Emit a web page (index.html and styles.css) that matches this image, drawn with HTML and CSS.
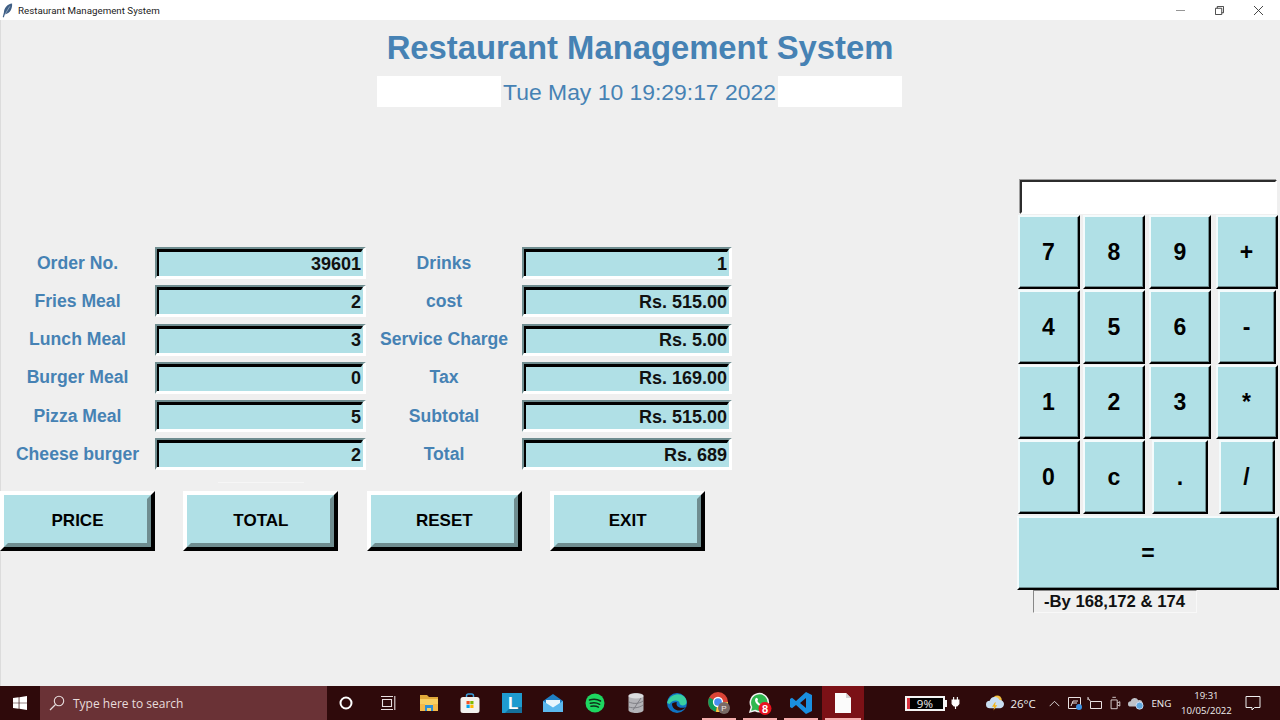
FILE: index.html
```html
<!DOCTYPE html>
<html lang="en">
<head>
<meta charset="utf-8">
<title>Restaurant Management System</title>
<link rel="stylesheet" href="styles.css">
</head>
<body>
<div class="app">
  <header class="titlebar">
    <div class="titlebar-left">
      <svg class="feather" viewBox="0 0 12 16"><path d="M11 .3C6 .8 2.300 5 2 10.500L.8 15l1 .6L3.500 12C8.500 11.500 11.500 6 11 .3z" fill="#3f5f85"/><path d="M8.500 3.500L2.300 14" stroke="#c9d6e6" stroke-width=".6" fill="none"/></svg>
      <span class="titlebar-text">Restaurant Management System</span>
    </div>
    <div class="win-controls">
      <span class="win-btn"><svg viewBox="0 0 10 10"><path d="M0 5h10" stroke="#8a8a8a" fill="none"/></svg></span>
      <span class="win-btn"><svg viewBox="0 0 10 10"><path d="M.5 2.500h7v7h-7zM2.500 2.500v-2h7v7h-2" stroke="#333" fill="none"/></svg></span>
      <span class="win-btn"><svg viewBox="0 0 10 10"><path d="M0 0l10 10M10 0L0 10" stroke="#333" fill="none"/></svg></span>
    </div>
  </header>

  <main class="window">
    <div class="heading">
      <h1 class="title">Restaurant Management System</h1>
      <div class="date-bar"><span class="date">Tue May 10 19:29:17 2022</span></div>
    </div>

    <div class="content">
      <section class="orders">
        <div class="form">
          <div class="label">Order No.</div><div class="entry"><span class="entry-val">39601</span></div>
          <div class="label">Drinks</div><div class="entry"><span class="entry-val">1</span></div>
          <div class="label">Fries Meal</div><div class="entry"><span class="entry-val">2</span></div>
          <div class="label">cost</div><div class="entry"><span class="entry-val">Rs. 515.00</span></div>
          <div class="label">Lunch Meal</div><div class="entry"><span class="entry-val">3</span></div>
          <div class="label">Service Charge</div><div class="entry"><span class="entry-val">Rs. 5.00</span></div>
          <div class="label">Burger Meal</div><div class="entry"><span class="entry-val">0</span></div>
          <div class="label">Tax</div><div class="entry"><span class="entry-val">Rs. 169.00</span></div>
          <div class="label">Pizza Meal</div><div class="entry"><span class="entry-val">5</span></div>
          <div class="label">Subtotal</div><div class="entry"><span class="entry-val">Rs. 515.00</span></div>
          <div class="label">Cheese burger</div><div class="entry"><span class="entry-val">2</span></div>
          <div class="label">Total</div><div class="entry"><span class="entry-val">Rs. 689</span></div>
        </div>
        <div class="faint-line"></div>
        <div class="actions">
          <div class="action"><span class="action-face">PRICE</span></div>
          <div class="action"><span class="action-face">TOTAL</span></div>
          <div class="action"><span class="action-face">RESET</span></div>
          <div class="action"><span class="action-face">EXIT</span></div>
        </div>
      </section>

      <aside class="calc">
        <div class="calc-display"></div>
        <div class="keys">
          <div class="key">7</div><div class="key">8</div><div class="key">9</div><div class="key">+</div>
          <div class="key">4</div><div class="key">5</div><div class="key">6</div><div class="key key-mid">-</div>
          <div class="key">1</div><div class="key">2</div><div class="key">3</div><div class="key">*</div>
          <div class="key">0</div><div class="key">c</div><div class="key key-narrow">.</div><div class="key key-narrow">/</div>
          <div class="key key-wide">=</div>
        </div>
        <div class="credit">-By 168,172 &amp; 174</div>
      </aside>
    </div>
  </main>

  <footer class="taskbar">
    <div class="start"><svg class="i16" viewBox="0 0 16 16"><path d="M0 2.300l6.500-.9v6.200H0zM7.300 1.300L16 0v7.600H7.300zM0 8.400h6.500v6.200L0 13.700zM7.300 8.400H16V16l-8.700-1.300z" fill="#fff"/></svg></div>
    <div class="search">
      <svg class="i16" viewBox="0 0 16 16"><circle cx="10" cy="6" r="4.700" fill="none" stroke="#e6dcdc" stroke-width="1.100"/><path d="M6.500 9.500L1 15" stroke="#e6dcdc" stroke-width="1.200"/></svg>
      <span class="search-text">Type here to search</span>
    </div>
    <div class="apps">
      <div class="app-icon"><svg class="i16" viewBox="0 0 16 16"><circle cx="8" cy="8" r="5.500" fill="none" stroke="#fff" stroke-width="2"/></svg></div>
      <div class="app-icon"><svg class="i16" viewBox="0 0 16 16"><path d="M2.500 4.500h9v7h-9zM1 1.500h12M1 14.500h12M14.800 1v14" fill="none" stroke="#e8e0e0" stroke-width="1.100"/></svg></div>
      <div class="app-icon"><svg class="i24" viewBox="0 0 24 24"><path d="M3 4h7l2 2h9v6H3z" fill="#e0a93a"/><path d="M3 8h18v12H3z" fill="#f8cf62"/><path d="M3 13h5v7H3zM16 13h5v7h-5z" fill="#f3b94a"/><path d="M8 14h8v6h-2v-3h-4v3H8z" fill="#2e8fd6"/></svg></div>
      <div class="app-icon"><svg class="i24" viewBox="0 0 24 24"><path d="M8.500 7V5a2 2 0 0 1 2-2h3a2 2 0 0 1 2 2v2" fill="none" stroke="#3aa0dc" stroke-width="1.500"/><rect x="2.500" y="6" width="19" height="16" rx="2.500" fill="#f3f1ee"/><path d="M8.500 10h3.200v3.200H8.500z" fill="#f25022"/><path d="M12.300 10h3.200v3.200h-3.200z" fill="#7fba00"/><path d="M8.500 13.800h3.200V17H8.500z" fill="#00a4ef"/><path d="M12.300 13.800h3.200V17h-3.200z" fill="#ffb900"/></svg></div>
      <div class="app-icon"><svg class="i24" viewBox="0 0 24 24"><rect x="2" y="2" width="20" height="20" fill="#1f9bcf"/><path d="M5 22l6-6h11v6z" fill="#15709c"/><text class="logo-l" x="8" y="18">L</text></svg></div>
      <div class="app-icon"><svg class="i24" viewBox="0 0 24 24"><path d="M2 10L12 3l10 7v11H2z" fill="#1f7fc4"/><path d="M5 9h14v5l-7 3.500L5 14z" fill="#eaf6fd"/><path d="M2 10l10 6.500L22 10v11H2z" fill="#5cb8ee"/></svg></div>
      <div class="app-icon"><svg class="i24" viewBox="0 0 24 24"><circle cx="12" cy="12" r="9.500" fill="#1ed760"/><path d="M6.500 9c3.800-1.100 8-.8 11 1M7.300 12.300c3.200-.9 6.500-.6 9.300 1M8 15.300c2.600-.6 5.200-.4 7.400.8" fill="none" stroke="#10301b" stroke-width="1.500" stroke-linecap="round"/></svg></div>
      <div class="app-icon"><svg class="i24" viewBox="0 0 24 24"><path d="M4.500 5c0-4 15-4 15 0v14c0 4-15 4-15 0z" fill="#b4b4b8"/><ellipse cx="12" cy="5" rx="7.500" ry="2.500" fill="#dcdcde"/><path d="M5 11c4 2 10 2 14-1M5 16c4 1.500 10 1 14-2M9 19L17 7" fill="none" stroke="#7f7f85"/></svg></div>
      <div class="app-icon"><svg class="i24" viewBox="0 0 24 24"><circle cx="12" cy="12" r="10" fill="#0f74c4"/><path d="M2.200 12C3 5 13 0 19 5.500c3 2.800 3.300 6.700 1.500 8-2 1.600-6 1-6-1.500 0-3-7-4-10 1z" fill="#3ad0a0"/><path d="M7 13c0 4 4 7 8 6.500 2.500-.4 4.500-1.500 6-3.500-2 1-5 1.200-7 .3-2.500-1-3-3.500-2-5-2.500 0-5 .5-5 1.700z" fill="#2b0a0a"/></svg></div>
      <div class="app-icon running"><svg class="i24" viewBox="0 0 24 24"><circle cx="11" cy="11" r="10" fill="#db4437"/><path d="M11 11L2.300 6.500A10 10 0 0 0 9 20.800z" fill="#0f9d58"/><path d="M11 11l-2 9.800A10 10 0 0 0 21 11z" fill="#ffcd40"/><circle cx="11" cy="11" r="4.500" fill="#4a8df0" stroke="#fff" stroke-width="1.300"/><circle cx="17" cy="17" r="6" fill="#7a6a66"/><text class="badge-p" x="17" y="20">P</text></svg></div>
      <div class="app-icon running"><svg class="i24" viewBox="0 0 24 24"><path d="M2 21l1.500-5A9 9 0 1 1 7 19.500z" fill="#2fb84f" stroke="#f3f3f3" stroke-width="1.500"/><path d="M7.500 7.500c1-1.500 2-.5 2.500 1 .2.700-.8 1-.5 1.700.700 1.300 1.500 2 2.800 2.700.700.300 1-.8 1.700-.5 1.500.5 1.700 1.500.7 2.500-3 2-9.500-4-7.200-7.400z" fill="#fff"/><circle cx="17" cy="17.500" r="6.500" fill="#e8121e"/><text class="badge-n" x="17" y="21.500">8</text></svg></div>
      <div class="app-icon running"><svg class="i24" viewBox="0 0 24 24"><path d="M17 1l6 3v16l-6 3L7 14l-4 3.200L1 16v-8l2-1.200L7 10zM17 7l-6 5 6 5z" fill="#1a8fe0"/></svg></div>
      <div class="app-icon app-active"><svg class="i24" viewBox="0 0 24 24"><path d="M4 2h11l5 5v15H4z" fill="#fbfbfb"/><path d="M15 2l5 5h-5z" fill="#d4d4d4"/></svg></div>
    </div>
    <div class="tray">
      <div class="battery"><span class="battery-level"></span><span class="battery-text">9%</span></div>
      <svg class="plug" viewBox="0 0 12 16"><path d="M3.500 0v4M8.500 0v4M1.500 4h9v5l-2.500 3H4L1.500 9zM6 12v4" fill="#fff" stroke="#fff" stroke-width="1.500"/></svg>
      <svg class="weather" viewBox="0 0 26 24"><circle cx="16" cy="8" r="6" fill="#f6c242"/><path d="M6 19a5 5 0 0 1 0-10 7 7 0 0 1 13-1 5.500 5.500 0 0 1 1 11z" fill="#c9dff2"/><path d="M13 11l-4 6h3l-1 5 5-7h-3l1-4z" fill="#f3b51b"/></svg>
      <span class="temp">26°C</span>
      <svg class="chevron" viewBox="0 0 12 8"><path d="M.5 7L6 1.500 11.500 7" fill="none" stroke="#eee"/></svg>
      <svg class="i16 tray-a" viewBox="0 0 16 16"><path d="M1.500 2.500h12v11h-12zM4 11l2-5h5M5 8h5" fill="none" stroke="#e8e0e0"/><circle cx="12" cy="12" r="3" fill="#3b8fe0"/></svg>
      <svg class="i16 tray-b" viewBox="0 0 16 16"><path d="M3.500 6.500h11v7h-11zM3.500 6.500l-2-3" fill="none" stroke="#e8e0e0"/><path d="M1 2v3" stroke="#e8e0e0"/></svg>
      <svg class="i16 tray-c" viewBox="0 0 16 16"><path d="M3.500 4.500h7v10h-7zM5 1.500h4M10.500 8l3-1.500v5l-3-1.500" fill="none" stroke="#e8e0e0"/></svg>
      <svg class="i16 tray-d" viewBox="0 0 18 16"><path d="M3 12a3 3 0 0 1 0-6 4.500 4.500 0 0 1 8.500-1A3.500 3.500 0 0 1 14 12z" fill="#bfc2c8"/><circle cx="13" cy="11" r="4" fill="#5ea7de" stroke="#eef" stroke-width=".8"/></svg>
      <span class="lang">ENG</span>
      <div class="clock"><span>19:31</span><span>10/05/2022</span></div>
      <svg class="i16 notify" viewBox="0 0 16 16"><path d="M1 1.500h14v11H9.500L7 15v-2.500H1z" fill="none" stroke="#eee"/></svg>
    </div>
  </footer>
</div>
</body>
</html>
```
FILE: styles.css
```css
* { box-sizing: border-box; }
html, body { margin: 0; padding: 0; }
body { font-family: "Liberation Sans", Arial, sans-serif; background: #efefef; }
.app { width: 1280px; height: 720px; display: flex; flex-direction: column; overflow: hidden; }

/* title bar */
.titlebar { height: 20px; background: #fff; display: flex; justify-content: space-between; align-items: center; flex: none; }
.titlebar-left { display: flex; align-items: center; padding-left: 2px; gap: 5px; }
.feather { width: 11px; height: 15px; }
.titlebar-text { font-family: Roboto, sans-serif; font-size: 9.750px; color: #222; white-space: nowrap; }
.win-controls { display: flex; padding-right: 2px; }
.win-btn { width: 39px; height: 20px; display: flex; align-items: center; justify-content: center; }
.win-btn svg { width: 9px; height: 9px; }

/* main window */
.window { flex: 1; min-height: 0; background: #efefef; box-shadow: inset 1px 0 0 #dcdcdc; }
.heading { display: flex; flex-direction: column; align-items: center; }
.title { margin: 0; height: 56px; line-height: 56px; font-size: 32.800px; font-weight: 700; color: #4682b4; }
.date-bar { width: 525px; height: 31px; margin-right: 1px; background: #fff; display: flex; justify-content: center; }
.date { background: #efefef; padding: 0 2px; font-size: 22.900px; line-height: 32px; color: #4682b4; }
.content { display: flex; justify-content: space-between; margin-top: 72px; }

/* order form */
.orders { padding-top: 68px; width: 732px; }
.form { display: grid; grid-template-columns: 155px 211px 156px 210px; grid-auto-rows: 38.250px; }
.label { height: 32px; display: flex; align-items: center; justify-content: center; font-size: 17.600px; font-weight: 700; color: #4682b4; white-space: nowrap; }
.entry { height: 32px; border-style: solid; border-width: 2px 3px 3px 2px; border-color: #6f8d90 #fff #fff #6f8d90; display: flex; }
.entry-val { flex: 1; border-style: solid; border-width: 3px 2px 0 2px; border-color: #000 #b0e0e6 #b0e0e6 #000; background: #b0e0e6; display: flex; align-items: center; justify-content: flex-end; font-size: 18px; font-weight: 700; color: #111; }
.faint-line { width: 86px; height: 1px; margin: 5px 0 0 218px; background: #f6f6f6; }
.actions { display: flex; gap: 28.400px; margin-top: 8.500px; }
.action { width: 155px; height: 60px; border: 4px solid; border-color: #fff #000 #000 #fff; display: flex; }
.action-face { flex: 1; border: 4px solid; border-color: #b0e0e6 #6f8d90 #6f8d90 #b0e0e6; background: #b0e0e6; display: flex; align-items: center; justify-content: center; font-size: 17px; font-weight: 700; color: #000; }

/* calculator */
.calc { width: 264px; flex: none; }
.calc-display { width: 257px; height: 34px; margin: 1px 0 0 4px; background: #fff; border: 2px solid; border-color: #2c2c2c #fff #fff #2c2c2c; box-shadow: -1px -1px 0 #a0a0a0; }
.keys { display: grid; grid-template-columns: 65px 66px 66px 67px; grid-auto-rows: 75px; margin-top: 1px; justify-items: center; align-items: start; }
.key { width: 62px; height: 74px; background: #b0e0e6; border: 2px solid; border-color: #f4fbfc #000 #000 #f4fbfc; box-shadow: inset -1px -1px 0 #6f8d90; display: flex; align-items: center; justify-content: center; font-size: 23px; font-weight: 700; color: #000; }
.key-mid { width: 58px; }
.key-narrow { width: 56px; }
.key-wide { grid-column: 1 / -1; width: 262px; height: 74px; margin-top: 1px; }
.credit { width: 164px; height: 23px; border: 1px solid; border-color: #888 #f8f8f8 #f8f8f8 #888; padding: 1px 0 0 10px; margin-left: 17px; display: flex; align-items: center; font-size: 16.700px; font-weight: 700; color: #111; white-space: nowrap; }

/* taskbar */
.taskbar { height: 34px; flex: none; background: #2f0a0b; display: flex; align-items: center; color: #eee; }
.i16 { width: 16px; height: 16px; flex: none; display: block; }
.i24 { width: 24px; height: 24px; flex: none; display: block; }
.start { width: 40px; height: 34px; display: flex; align-items: center; justify-content: center; }
.start .i16 { width: 14px; height: 14px; }
.search { width: 287px; height: 34px; background: #6a3236; display: flex; align-items: center; padding-left: 9px; gap: 8px; }
.search-text { font-family: "Open Sans", sans-serif; font-size: 12px; color: #e8dcdc; }
.apps { display: flex; margin-left: -1.500px; }
.app-icon { width: 41.400px; height: 34px; display: flex; align-items: center; justify-content: center; }
.running { background: linear-gradient(#f4adad, #f4adad) center bottom / 34px 2px no-repeat; }
.app-active { background: linear-gradient(#f4adad, #f4adad) center bottom / 36px 2px no-repeat, #7b1116; }
.logo-l { font-family: "Liberation Sans", sans-serif; font-weight: 700; font-size: 17px; fill: #fff; }
.badge-p { font-family: "Liberation Sans", sans-serif; font-size: 8px; fill: #f0e8e8; text-anchor: middle; }
.badge-n { font-family: "Liberation Sans", sans-serif; font-weight: 700; font-size: 11px; fill: #fff; text-anchor: middle; }

.tray { display: flex; align-items: center; margin-left: 41.300px; }
.battery { width: 40px; height: 15px; margin-right: 2px; background: #000; border: 2px solid #f4f4f4; display: flex; align-items: center; position: relative; justify-content: center; }
.battery::after { content: ""; position: absolute; right: -4px; top: 2px; width: 2px; height: 7px; background: #f4f4f4; }
.battery-level { position: absolute; left: 0; top: 0; bottom: 0; width: 3px; background: #d9323e; }
.battery-text { font-family: "Open Sans", sans-serif; font-size: 11.500px; color: #eee; }
.plug { width: 9px; height: 12px; margin-left: 4.500px; flex: none; }
.weather { width: 20px; height: 18px; margin-left: 24.500px; flex: none; }
.temp { font-family: "Open Sans", sans-serif; font-size: 11.500px; width: 25px; margin-left: 5.500px; color: #eee; white-space: nowrap; }
.chevron { width: 11px; height: 7px; margin-left: 14px; flex: none; }
.tray-a { margin-left: 7px; }
.tray-b { margin-left: 4px; }
.tray-c { margin-left: 5px; width: 14px; }
.tray-d { margin-left: 6px; }
.lang { font-family: "Open Sans", sans-serif; font-size: 9.800px; width: 19px; margin-left: 7px; color: #eee; white-space: nowrap; }
.clock { display: flex; flex-direction: column; align-items: center; width: 50px; font-family: "Open Sans", sans-serif; font-size: 9.600px; line-height: 15px; margin-left: 11px; color: #eee; white-space: nowrap; }
.notify { margin-left: 14px; }
```
